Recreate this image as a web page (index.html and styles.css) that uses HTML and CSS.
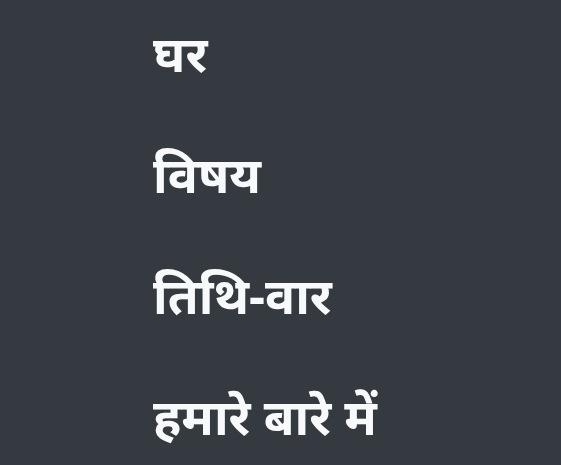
FILE: index.html
```html
<!DOCTYPE html>
<html lang="hi">
<head>
<meta charset="utf-8">
<link rel="stylesheet" href="styles.css">
</head>
<body>
<nav class="menu">
  <a class="item" href="#">घर</a>
  <a class="item" href="#">विषय</a>
  <a class="item" href="#">तिथि-वार</a>
  <a class="item" href="#">हमारे बारे में</a>
</nav>
</body>
</html>
```

FILE: styles.css
```css
html, body {
  margin: 0;
  height: 100%;
  background: #343a40;
}
.menu {
  display: flex;
  flex-direction: column;
  gap: 51px;
  padding: 18px 0 0 153px;
}
.item {
  display: block;
  color: #f8f9fa;
  text-decoration: none;
  font-family: "Noto Sans", "DejaVu Sans", sans-serif;
  font-weight: bold;
  font-size: 50px;
  height: 70px;
  line-height: 70px;
}
```
